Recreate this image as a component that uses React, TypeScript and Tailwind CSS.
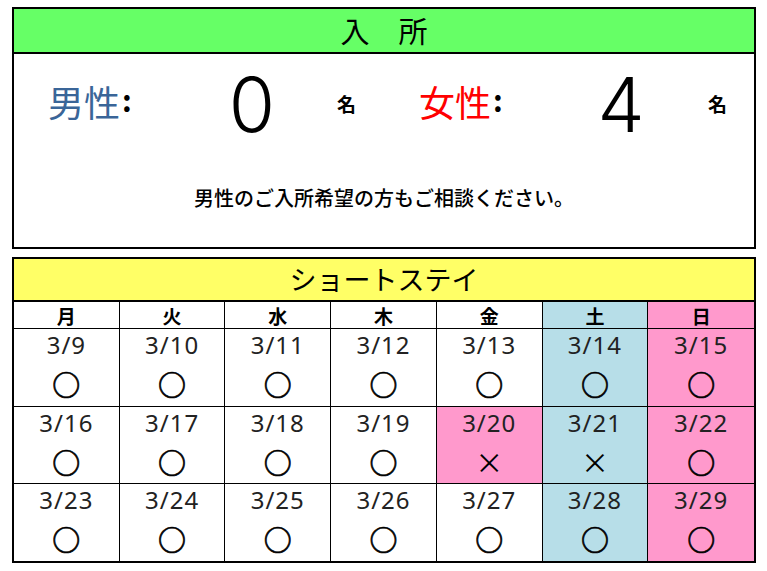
import React from "react";

const days = ["月", "火", "水", "木", "金", "土", "日"];

type Cell = { date: string; mark: string; holiday?: boolean };

const weeks: Cell[][] = [
  [
    { date: "3/9", mark: "○" },
    { date: "3/10", mark: "○" },
    { date: "3/11", mark: "○" },
    { date: "3/12", mark: "○" },
    { date: "3/13", mark: "○" },
    { date: "3/14", mark: "○" },
    { date: "3/15", mark: "○" },
  ],
  [
    { date: "3/16", mark: "○" },
    { date: "3/17", mark: "○" },
    { date: "3/18", mark: "○" },
    { date: "3/19", mark: "○" },
    { date: "3/20", mark: "×", holiday: true },
    { date: "3/21", mark: "×" },
    { date: "3/22", mark: "○" },
  ],
  [
    { date: "3/23", mark: "○" },
    { date: "3/24", mark: "○" },
    { date: "3/25", mark: "○" },
    { date: "3/26", mark: "○" },
    { date: "3/27", mark: "○" },
    { date: "3/28", mark: "○" },
    { date: "3/29", mark: "○" },
  ],
];

// 土 = 青, 日・祝 = ピンク
function bgFor(col: number, holiday?: boolean) {
  if (col === 6 || holiday) return "bg-[#ff99cc]";
  if (col === 5) return "bg-[#b7dee8]";
  return "bg-white";
}

function Label({ text, color, width }: { text: string; color: string; width: string }) {
  return (
    <div className={`flex items-start mt-[29px] ${width}`}>
      <span className={`text-[36px] leading-none ${color}`}>{text}</span>
      <span className="text-[30px] leading-none font-bold ml-[2px] mt-[1px]">:</span>
    </div>
  );
}

function Count({ n }: { n: string }) {
  return (
    <div className="w-[80px] text-center text-[75px] leading-none font-light mt-[13px] font-['Inter','Liberation_Sans',sans-serif]">
      {n}
    </div>
  );
}

export default function App() {
  return (
    <div className="w-[767px] h-[571px] bg-white pt-[7px] pl-[12px] text-black font-['Noto_Sans_CJK_JP','Noto_Sans',sans-serif]">
      {/* 入所 */}
      <div className="w-[744px] h-[242px] border-2 border-black flex flex-col">
        <div className="h-[45px] shrink-0 bg-[#66ff66] border-b-2 border-black flex items-center justify-center text-[29px]">
          入　所
        </div>
        <div className="flex h-[88px] items-start pl-[34px]">
          <Label text="男性" color="text-[#3a6598]" width="w-[164px]" />
          <Count n="0" />
          <div className="ml-[45px] w-[20px] text-[19px] leading-none font-bold mt-[40px]">名</div>
          <div className="ml-[62px]">
            <Label text="女性" color="text-[#ff0000]" width="w-[162px]" />
          </div>
          <Count n="4" />
          <div className="ml-[47px] w-[20px] text-[19px] leading-none font-bold mt-[40px]">名</div>
        </div>
        <p className="mt-[46px] text-center text-[20px] leading-none font-medium">
          男性のご入所希望の方もご相談ください。
        </p>
      </div>

      {/* ショートステイ */}
      <div className="mt-[8px] w-[744px] border-2 border-black">
        <div className="h-[43px] bg-[#ffff66] border-b-2 border-black flex items-center justify-center text-[27px]">
          ショートステイ
        </div>
        <div className="grid grid-cols-7 h-[27px] border-b border-black">
          {days.map((d, i) => (
            <div
              key={d}
              className={`flex items-center justify-center text-[19px] font-bold leading-none ${bgFor(i)} ${i < 6 ? "border-r border-black" : ""}`}
            >
              {d}
            </div>
          ))}
        </div>
        {weeks.map((week, r) => (
          <div key={r} className={`grid grid-cols-7 ${r === 0 ? "h-[78px]" : "h-[77px]"} ${r < 2 ? "border-b border-black" : ""}`}>
            {week.map((c, i) => (
              <div
                key={c.date}
                className={`flex flex-col items-center ${bgFor(i, c.holiday)} ${i < 6 ? "border-r border-black" : ""}`}
              >
                <div className="pt-[4px] text-[24px] leading-none text-[#222] tracking-[1px] font-['Noto_Sans','Noto_Sans_CJK_JP',sans-serif]">
                  {c.date}
                </div>
                {c.mark === "○" ? (
                  <div className="mt-[12px] h-[30px] flex items-center justify-center text-[28px] leading-none font-bold [-webkit-text-stroke:0.6px_black]">
                    ○
                  </div>
                ) : (
                  <div className="mt-[12px] h-[30px] flex items-center justify-center text-[28px] leading-none">×</div>
                )}
              </div>
            ))}
          </div>
        ))}
      </div>
    </div>
  );
}
